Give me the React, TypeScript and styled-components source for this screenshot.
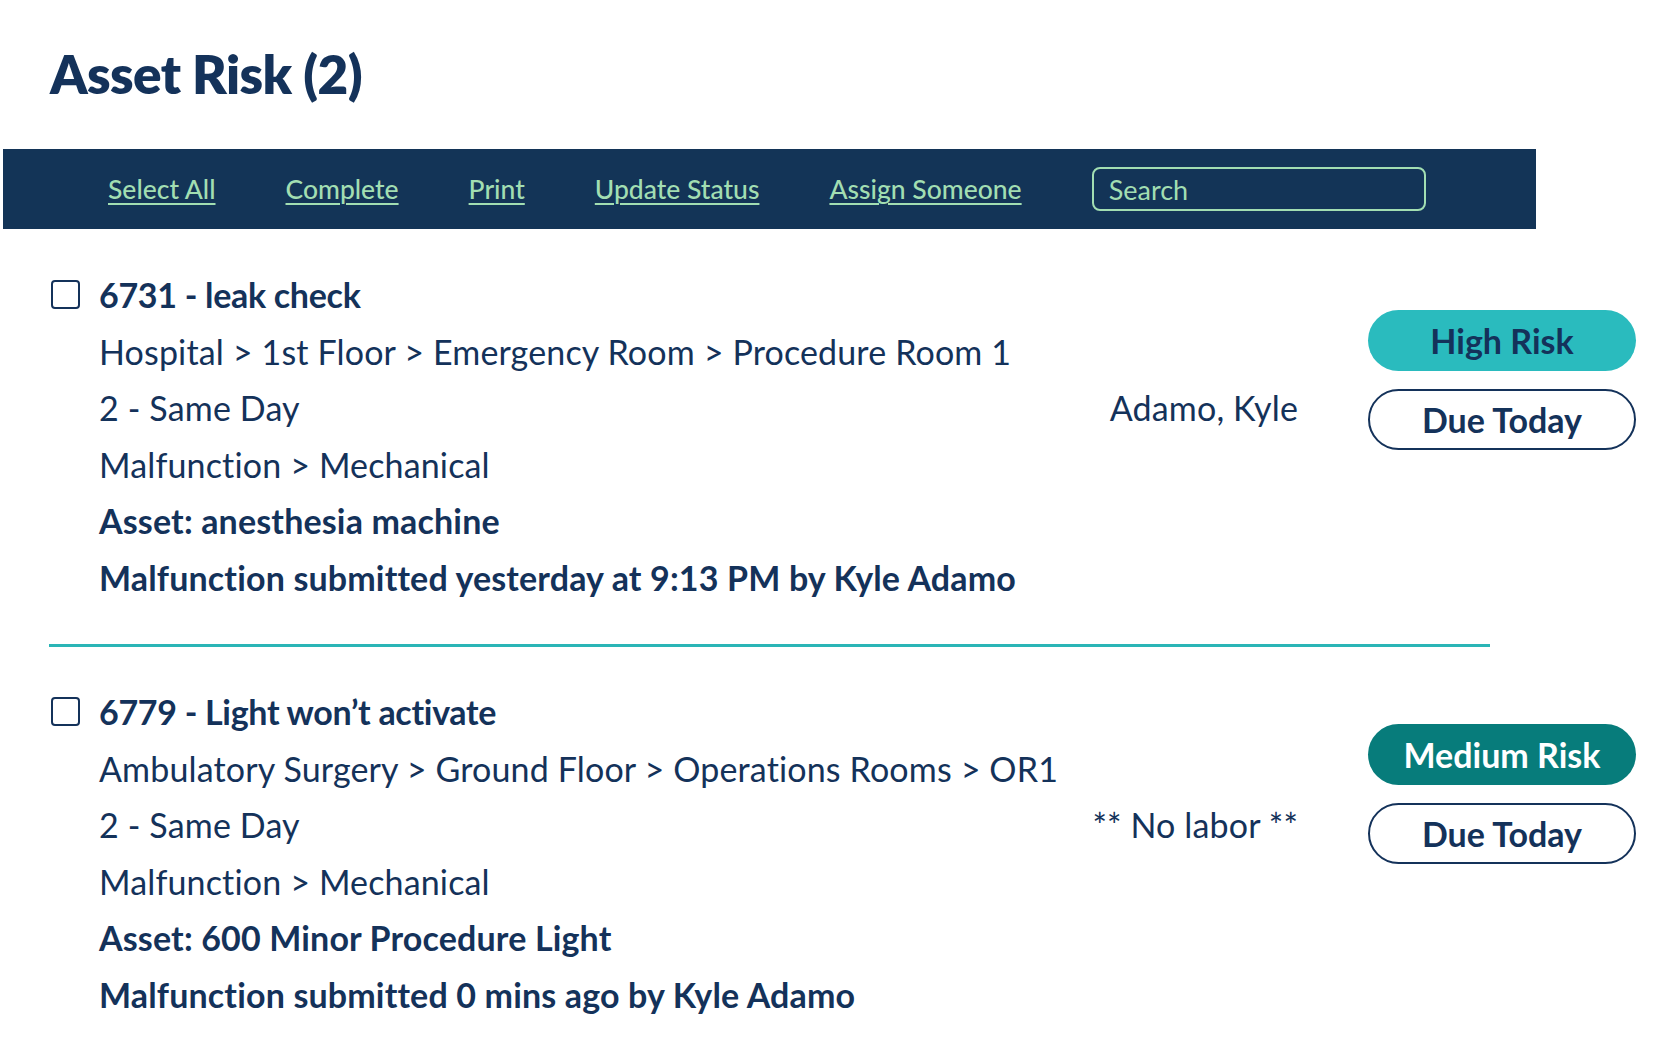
import React from "react";
import styled, { createGlobalStyle } from "styled-components";

const GlobalStyle = createGlobalStyle`
  body {
    margin: 0;
    background: #ffffff;
    font-family: Lato, "Noto Sans", sans-serif;
    color: #14325a;
  }
`;

const Page = styled.div`
  width: 1670px;
  min-height: 1050px;
  background: #ffffff;
`;

const Heading = styled.h1`
  margin: 0;
  padding: 42px 0 0 50px;
  height: 149px;
  box-sizing: border-box;
  font-size: 53px;
  font-weight: 800;
  letter-spacing: -0.6px;
  color: #14325a;
`;

const Toolbar = styled.div`
  margin-left: 3px;
  width: 1533px;
  height: 80px;
  box-sizing: border-box;
  padding-left: 105px;
  background: #133457;
  display: flex;
  align-items: center;
  gap: 70px;
`;

const ToolLink = styled.a`
  color: #a2deb2;
  font-size: 26.5px;
  font-weight: 500;
  text-decoration: underline;
  text-underline-offset: 4px;
  text-decoration-thickness: 2px;
  cursor: pointer;
`;

const SearchBox = styled.div`
  width: 334px;
  height: 44px;
  box-sizing: border-box;
  border: 2px solid #a2deb2;
  border-radius: 8px;
  padding-left: 15px;
  display: flex;
  align-items: center;
  color: #a2deb2;
  font-size: 27px;
`;

const List = styled.div`
  padding: 38px 0 0 49px;
`;

const Item = styled.div`
  display: flex;
  align-items: flex-start;
`;

const Check = styled.div`
  width: 25px;
  height: 25px;
  border: 2px solid #14325a;
  border-radius: 4px;
  margin-top: 13px;
  margin-right: 19px;
  margin-left: 2px;
  flex-shrink: 0;
`;

const Body = styled.div`
  width: 1199px;
`;

const Line = styled.div<{ $bold?: boolean; $title?: boolean }>`
  display: flex;
  justify-content: space-between;
  height: 56.5px;
  line-height: 56px;
  font-size: 34px;
  font-weight: ${(p) => (p.$bold ? 700 : 400)};
  letter-spacing: ${(p) => (p.$title ? "-0.3px" : "0.15px")};
  color: #14325a;
  white-space: nowrap;
`;

const Pills = styled.div<{ $top: number }>`
  margin-left: 70px;
  margin-top: ${(p) => p.$top}px;
  display: flex;
  flex-direction: column;
  gap: 18px;
`;

const Pill = styled.div<{ $kind: "high" | "medium" | "due" }>`
  width: 268px;
  height: 61px;
  box-sizing: border-box;
  border-radius: 31px;
  display: flex;
  align-items: center;
  justify-content: center;
  font-size: 34px;
  font-weight: 700;
  background: ${(p) =>
    p.$kind === "high" ? "#2abbbe" : p.$kind === "medium" ? "#077c7b" : "#ffffff"};
  color: ${(p) => (p.$kind === "medium" ? "#ffffff" : "#14325a")};
  border: ${(p) => (p.$kind === "due" ? "2px solid #14325a" : "none")};
`;

const Divider = styled.hr`
  margin: 38px 0 37px 0;
  width: 1441px;
  border: none;
  border-top: 3px solid #2ab5b6;
`;

type Asset = {
  title: string;
  location: string;
  priority: string;
  assignee: string;
  problem: string;
  asset: string;
  submitted: string;
  risk: "high" | "medium";
  pillTop: number;
};

const assets: Asset[] = [
  {
    title: "6731 - leak check",
    location: "Hospital > 1st Floor > Emergency Room > Procedure Room 1",
    priority: "2 - Same Day",
    assignee: "Adamo, Kyle",
    problem: "Malfunction > Mechanical",
    asset: "Asset: anesthesia machine",
    submitted: "Malfunction submitted yesterday at 9:13 PM by Kyle Adamo",
    risk: "high",
    pillTop: 43,
  },
  {
    title: "6779 - Light won\u2019t activate",
    location: "Ambulatory Surgery > Ground Floor > Operations Rooms > OR1",
    priority: "2 - Same Day",
    assignee: "** No labor **",
    problem: "Malfunction > Mechanical",
    asset: "Asset: 600 Minor Procedure Light",
    submitted: "Malfunction submitted 0 mins ago by Kyle Adamo",
    risk: "medium",
    pillTop: 40,
  },
];

const AssetRow = ({ a }: { a: Asset }) => (
  <Item>
    <Check />
    <Body>
      <Line $bold $title>{a.title}</Line>
      <Line>{a.location}</Line>
      <Line>
        <span>{a.priority}</span>
        <span>{a.assignee}</span>
      </Line>
      <Line>{a.problem}</Line>
      <Line $bold>{a.asset}</Line>
      <Line $bold>{a.submitted}</Line>
    </Body>
    <Pills $top={a.pillTop}>
      <Pill $kind={a.risk}>{a.risk === "high" ? "High Risk" : "Medium Risk"}</Pill>
      <Pill $kind="due">Due Today</Pill>
    </Pills>
  </Item>
);

const App = () => {
  return (
    <Page>
      <GlobalStyle />
      <Heading>Asset Risk (2)</Heading>
      <Toolbar>
        <ToolLink>Select All</ToolLink>
        <ToolLink>Complete</ToolLink>
        <ToolLink>Print</ToolLink>
        <ToolLink>Update Status</ToolLink>
        <ToolLink>Assign Someone</ToolLink>
        <SearchBox>Search</SearchBox>
      </Toolbar>
      <List>
        <AssetRow a={assets[0]} />
        <Divider />
        <AssetRow a={assets[1]} />
      </List>
    </Page>
  );
};

export default App;
